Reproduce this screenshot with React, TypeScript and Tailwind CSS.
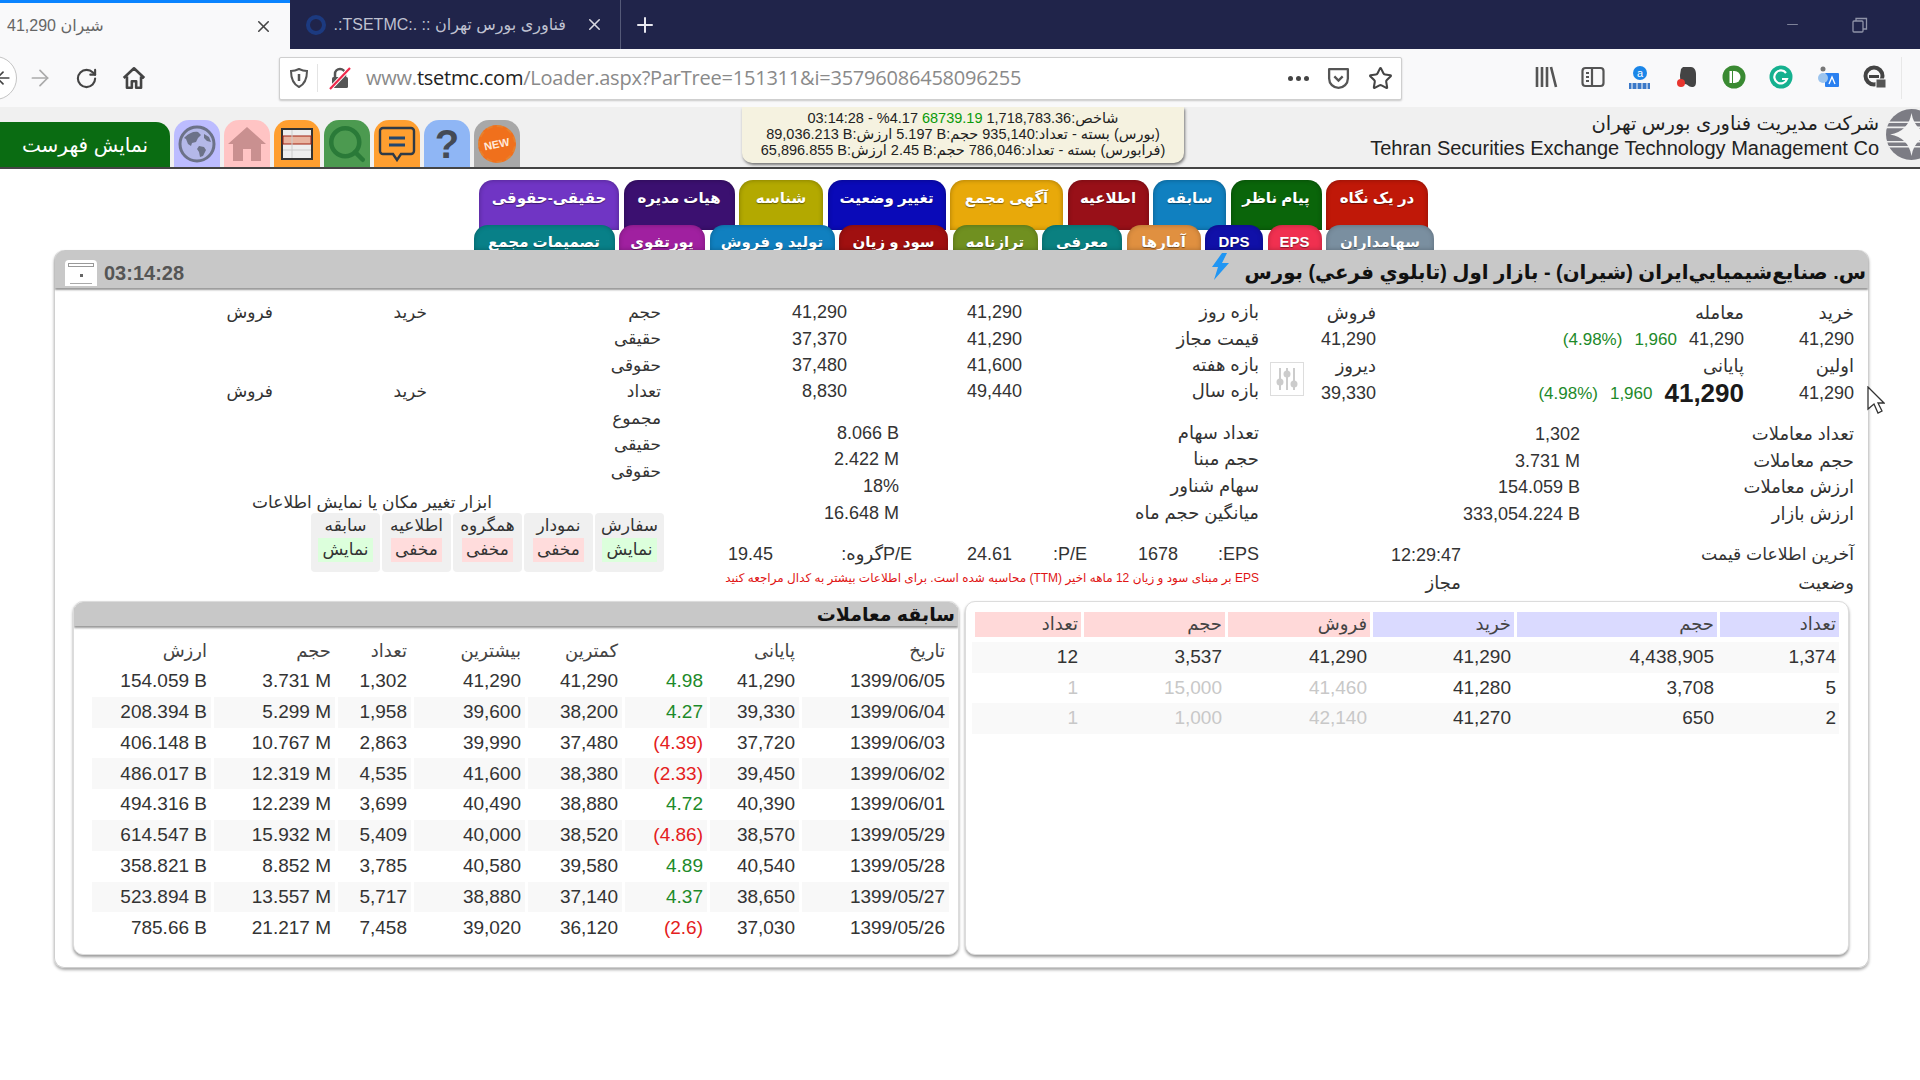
import { Search, RotateCw, ArrowRight, ArrowLeft, X, Plus, Star, Minus } from "lucide-react";

const topTabs = [
  { label: "حقیقی-حقوقی", w: "w-[140px]", bg: "bg-[#7035c4]" },
  { label: "هیات مدیره", w: "w-[111px]", bg: "bg-[#3b1070]" },
  { label: "شناسه", w: "w-[84px]", bg: "bg-[#b3a900]" },
  { label: "تغییر وضعیت", w: "w-[118px]", bg: "bg-[#0a0ab8]" },
  { label: "آگهی مجمع", w: "w-[113px]", bg: "bg-[#e8a90a]" },
  { label: "اطلاعیه", w: "w-[81px]", bg: "bg-[#981018]" },
  { label: "سابقه", w: "w-[73px]", bg: "bg-[#1080c0]" },
  { label: "پیام ناظر", w: "w-[91px]", bg: "bg-[#0a650a]" },
  { label: "در یک نگاه", w: "w-[102px]", bg: "bg-[#c01808]" },
];

const lowerTabs = [
  { label: "تصمیمات مجمع", w: "w-[141px]", bg: "bg-[#088088]" },
  { label: "پورتفوی", w: "w-[86px]", bg: "bg-[#a020a0]" },
  { label: "تولید و فروش", w: "w-[125px]", bg: "bg-[#1080c0]" },
  { label: "سود و زیان", w: "w-[109px]", bg: "bg-[#a01010]" },
  { label: "ترازنامه", w: "w-[85px]", bg: "bg-[#709020]" },
  { label: "معرفی", w: "w-[80px]", bg: "bg-[#0a8080]" },
  { label: "آمارها", w: "w-[74px]", bg: "bg-[#e09040]" },
  { label: "DPS", w: "w-[58px]", bg: "bg-[#1010a8]" },
  { label: "EPS", w: "w-[54px]", bg: "bg-[#f03050]" },
  { label: "سهامداران", w: "w-[108px]", bg: "bg-[#7a8fa0]" },
];

const history = [
  ["1399/06/05", "41,290", "4.98", "41,290", "41,290", "1,302", "3.731 M", "154.059 B"],
  ["1399/06/04", "39,330", "4.27", "38,200", "39,600", "1,958", "5.299 M", "208.394 B"],
  ["1399/06/03", "37,720", "(4.39)", "37,480", "39,990", "2,863", "10.767 M", "406.148 B"],
  ["1399/06/02", "39,450", "(2.33)", "38,380", "41,600", "4,535", "12.319 M", "486.017 B"],
  ["1399/06/01", "40,390", "4.72", "38,880", "40,490", "3,699", "12.239 M", "494.316 B"],
  ["1399/05/29", "38,570", "(4.86)", "38,520", "40,000", "5,409", "15.932 M", "614.547 B"],
  ["1399/05/28", "40,540", "4.89", "39,580", "40,580", "3,785", "8.852 M", "358.821 B"],
  ["1399/05/27", "38,650", "4.37", "37,140", "38,880", "5,717", "13.557 M", "523.894 B"],
  ["1399/05/26", "37,030", "(2.6)", "36,120", "39,020", "7,458", "21.217 M", "785.66 B"],
];

const orders = [
  { buyCount: "1,374", buyVol: "4,438,905", buy: "41,290", sell: "41,290", sellVol: "3,537", sellCount: "12", dim: false },
  { buyCount: "5", buyVol: "3,708", buy: "41,280", sell: "41,460", sellVol: "15,000", sellCount: "1", dim: true },
  { buyCount: "2", buyVol: "650", buy: "41,270", sell: "42,140", sellVol: "1,000", sellCount: "1", dim: true },
];

const tools = [
  { title: "سفارش", state: "نمایش", tone: "bg-[#dcffdc]" },
  { title: "نمودار", state: "مخفی", tone: "bg-[#ffdcdc]" },
  { title: "همگروه", state: "مخفی", tone: "bg-[#ffdcdc]" },
  { title: "اطلاعیه", state: "مخفی", tone: "bg-[#ffdcdc]" },
  { title: "سابقه", state: "نمایش", tone: "bg-[#dcffdc]" },
];

const historyCols = "grid grid-cols-[150px_92px_85px_97px_114px_76px_124px_122px]";
const orderCols = "grid w-[867px] grid-cols-[122px_203px_144px_145px_144px_109px]";

function Num({ children, className = "" }: { children: React.ReactNode; className?: string }) {
  return (
    <span dir="ltr" className={`inline-block ${className}`}>
      {children}
    </span>
  );
}

function PageIconTab({ bg, children }: { bg: string; children: React.ReactNode }) {
  return (
    <div className={`w-[46px] h-[48px] rounded-t-[15px] flex items-center justify-center ${bg}`}>{children}</div>
  );
}

function BrowserChrome() {
  return (
    <>
      <div className="h-[49px] bg-[#20244a] flex">
        <div className="w-[290px] bg-[#f9f9fa] border-t-[3px] border-[#0a84ff] flex items-center pl-[7px] pr-[17px]">
          <span dir="rtl" className="text-[16px] text-[#666]">
            شیران 41,290
          </span>
          <X className="ml-auto text-[#444]" size={19} strokeWidth={2} />
        </div>
        <div className="w-[331px] border-r border-[#555a78] flex items-center pl-[16px] pr-[16px]">
          <span className="w-[20px] h-[20px] rounded-full border-[4px] border-[#1c3a80] shrink-0" />
          <span dir="rtl" className="ml-[6px] w-[234px] overflow-hidden whitespace-nowrap text-[16px] text-[#bfc1d0]">
            فناوری بورس تهران :: .:TSETMC:.
          </span>
          <X className="ml-auto text-[#d8d8e0]" size={19} strokeWidth={2} />
        </div>
        <div className="w-[48px] flex items-center justify-center">
          <Plus className="text-[#e8e8f0]" size={24} strokeWidth={2} />
        </div>
        <div className="ml-auto flex items-center pr-[52px] gap-[51px] text-[#8f93a8]">
          <Minus size={17} strokeWidth={1.2} />
          <svg width="16" height="16" viewBox="0 0 16 16" fill="none" stroke="currentColor" strokeWidth="1.3">
            <rect x="1" y="4" width="10" height="11" rx="1" />
            <path d="M4 4V1.5h10.5V12H11" />
          </svg>
        </div>
      </div>

      <div className="h-[58px] bg-[#f9f9fa] flex items-center">
        <div className="w-[44px] h-[44px] -ml-[27px] rounded-full border border-[#c4c4c4] bg-white flex items-center justify-center shrink-0">
          <ArrowLeft className="text-[#444] ml-[16px]" size={20} />
        </div>
        <div className="w-[46px] flex justify-center">
          <ArrowRight className="text-[#aaa]" size={26} strokeWidth={1.6} />
        </div>
        <div className="w-[47px] flex justify-center">
          <RotateCw className="text-[#444]" size={23} strokeWidth={2.2} />
        </div>
        <div className="w-[47px] flex justify-center">
          <svg width="26" height="26" viewBox="0 0 24 24" fill="none" stroke="#444" strokeWidth="2.4" strokeLinejoin="round">
            <path d="M2.5 12 12 3l9.5 9M5.5 10.5V21h4.5v-6h4v6h4.500V10.500" />
          </svg>
        </div>
        <div className="ml-[122px] w-[1123px] h-[43px] bg-white border border-[#cfcfcf] rounded-[2px] shadow-[0_1px_2px_rgba(0,0,0,0.2)] flex items-center">
          <div className="w-[38px] h-[28px] border-r border-[#e4e4e4] flex items-center justify-center">
            <svg width="20" height="22" viewBox="0 0 20 22" fill="none" stroke="#555" strokeWidth="2">
              <path d="M10 2c3 1.500 5 2 8 2 0 8-2 13-8 16C4 17 2 12 2 4c3 0 5-.5 8-2Z" />
              <path d="M10 7v7" strokeWidth="2.500" />
            </svg>
          </div>
          <div className="w-[48px] flex justify-center pr-[4px]">
            <svg width="24" height="24" viewBox="0 0 24 24">
              <path d="M7 11V8a5 5 0 0 1 10 0v3" fill="none" stroke="#555" strokeWidth="2.500" />
              <rect x="4" y="11" width="16" height="11" rx="1.500" fill="#555" />
              <path d="M2 23 22 2" stroke="#fff" strokeWidth="4" />
              <path d="M2 23 22 2" stroke="#f0284a" strokeWidth="2.200" />
            </svg>
          </div>
          <span className="text-[20px] text-[#8a8a8a] [font-family:'Open_Sans',sans-serif] tracking-[-0.22px]">
            www.<span className="text-[#222]">tsetmc.com</span>/Loader.aspx?ParTree=151311&i=35796086458096255
          </span>
          <div className="ml-auto flex items-center gap-[17px] pr-[8px]">
            <div className="flex gap-[3px]">
              <i className="w-[5px] h-[5px] rounded-full bg-[#444]" />
              <i className="w-[5px] h-[5px] rounded-full bg-[#444]" />
              <i className="w-[5px] h-[5px] rounded-full bg-[#444]" />
            </div>
            <svg width="25" height="25" viewBox="0 0 24 24" fill="none" stroke="#555" strokeWidth="2.200">
              <path d="M3 3h18v9a9 9 0 0 1-18 0Z" strokeLinejoin="round" />
              <path d="m8 10 4 4 4-4" />
            </svg>
            <Star className="text-[#444]" size={25} strokeWidth={2} />
          </div>
        </div>
        <div className="ml-[120px] flex">
          <div className="w-[47px] flex justify-center">
            <svg width="24" height="24" viewBox="0 0 24 24" stroke="#555" strokeWidth="2.600" fill="none">
              <path d="M3 2v20M8 2v20M13 2v20M17 2l5 20" />
            </svg>
          </div>
          <div className="w-[47px] flex justify-center">
            <svg width="24" height="24" viewBox="0 0 24 24" fill="none" stroke="#555" strokeWidth="2.200">
              <rect x="1.500" y="3" width="21" height="18" rx="3" />
              <path d="M11 3v18M5 8h3M5 12h3M5 16h3" />
            </svg>
          </div>
          <div className="w-[47px] flex justify-center">
            <svg width="24" height="26" viewBox="0 0 24 26">
              <circle cx="12" cy="8" r="7" fill="#1b86e8" />
              <text x="12" y="12" fontSize="11" fill="#fff" textAnchor="middle" fontFamily="Liberation Sans">a</text>
              <rect x="1" y="18" width="21" height="6" fill="#3a78c8" />
              <path d="M4 18v6M9 18v6M14 18v6M19 18v6" stroke="#fff" />
            </svg>
          </div>
          <div className="w-[47px] flex justify-center">
            <svg width="22" height="24" viewBox="0 0 22 24">
              <path d="M7 2h8c3 0 5 3 5 7v8c0 3-1 5-4 5-4 0-4-3-7-3H6c-2-3-2-7-2-9l1-6Z" fill="#444" />
              <circle cx="5" cy="18" r="4" fill="#e8352e" />
            </svg>
          </div>
          <div className="w-[47px] flex justify-center">
            <svg width="24" height="24" viewBox="0 0 24 24">
              <circle cx="12" cy="12" r="11.500" fill="#3a8a32" />
              <rect x="7.500" y="6" width="2.500" height="12" fill="#fff" />
              <path d="M11 6h1.500a6 6 0 0 1 0 12H11Z" fill="#fff" />
            </svg>
          </div>
          <div className="w-[47px] flex justify-center">
            <svg width="24" height="24" viewBox="0 0 24 24">
              <circle cx="12" cy="12" r="11.500" fill="#15b18f" />
              <path d="M17 8a6.500 6.500 0 1 0 1 6h-5" fill="none" stroke="#fff" strokeWidth="2.200" />
            </svg>
          </div>
          <div className="w-[47px] flex justify-center">
            <svg width="24" height="24" viewBox="0 0 24 24">
              <rect x="9" y="8" width="14" height="14" rx="1" fill="#2a80f0" />
              <path d="M13 19l3-7 3 7" fill="none" stroke="#fff" strokeWidth="1.300" />
              <circle cx="7" cy="13" r="5" fill="#9cc4ee" />
              <circle cx="7" cy="4" r="2.500" fill="#777" />
            </svg>
          </div>
          <div className="w-[47px] flex justify-center">
            <svg width="24" height="24" viewBox="0 0 24 24">
              <circle cx="11" cy="11" r="8.500" fill="none" stroke="#444" strokeWidth="4" />
              <rect x="6" y="10" width="10" height="3" fill="#444" />
              <rect x="13" y="14" width="10" height="9" fill="#555" stroke="#f9f9fa" />
            </svg>
          </div>
        </div>
        <div className="ml-[3px] h-[42px] border-l border-[#e8e8e8]" />
      </div>
    </>
  );
}

function SiteHeader() {
  return (
    <div className="h-[62px] bg-[#f0f0f0] border-b-2 border-[#444] flex overflow-hidden">
      <div className="w-[170px] h-[45px] mt-[15px] bg-[#0a6c12] rounded-tr-[14px] flex items-center justify-center text-white text-[20px]">
        نمایش فهرست
      </div>
      <div className="ml-[4px] mt-[13px] flex gap-[4px]">
        <PageIconTab bg="bg-[#bcbcff]">
          <svg width="38" height="38" viewBox="0 0 38 38">
            <circle cx="19" cy="19" r="17" fill="#b4b8e8" stroke="#6c7288" strokeWidth="3" />
            <path d="M7 12c4-4 9-6 13-5l3 3-3 3-2 4-4 1-1 3-3-2-2-5-2-1ZM21 21l5 1 2 3-3 6-3 1-1-5-2-3ZM26 9l5 3 2 5-4-1-3-3Z" fill="#6c7288" />
          </svg>
        </PageIconTab>
        <PageIconTab bg="bg-[#ffc4c4]">
          <svg width="40" height="36" viewBox="0 0 40 36" fill="#c99090">
            <path d="M20 1 39 18h-5v17H24V23h-8v12H6V18H1Z" />
          </svg>
        </PageIconTab>
        <PageIconTab bg="bg-[#ff9f30]">
          <svg width="32" height="32" viewBox="0 0 32 32">
            <rect x="1" y="1" width="30" height="30" fill="#eee" stroke="#333" strokeWidth="2" />
            <rect x="2" y="8" width="28" height="8" fill="#e8b4a0" stroke="#a02010" />
            <path d="M2 22h28M11 2v28" stroke="#ccc" />
          </svg>
        </PageIconTab>
        <PageIconTab bg="bg-[#4c9a50]">
          <Search className="text-[#2a7a38]" size={42} strokeWidth={2.600} />
        </PageIconTab>
        <PageIconTab bg="bg-[#ff9f30]">
          <svg width="38" height="36" viewBox="0 0 38 36" fill="none">
            <path d="M5 2h28a3 3 0 0 1 3 3v20a3 3 0 0 1-3 3H23l-4 6-4-6H5a3 3 0 0 1-3-3V5a3 3 0 0 1 3-3Z" stroke="#2f3a46" strokeWidth="2.400" />
            <path d="M11 12h16M11 19h16" stroke="#23466e" strokeWidth="3" />
          </svg>
        </PageIconTab>
        <PageIconTab bg="bg-[#8fb6f5]">
          <span className="text-[40px] leading-none font-bold text-[#444a55]">?</span>
        </PageIconTab>
        <PageIconTab bg="bg-[#a8a8a8]">
          <div className="w-[38px] h-[38px] rounded-full bg-[#f0701c] border-2 border-dashed border-[#e8802c] flex items-center justify-center">
            <span className="text-[11px] font-bold text-[#ffe8d8] -rotate-12">NEW</span>
          </div>
        </PageIconTab>
      </div>

      <div className="ml-[222px] w-[442px] h-[56px] bg-[#f5f2e0] rounded-b-[10px] shadow-[1px_2px_3px_rgba(0,0,0,0.5)] text-[14.500px] leading-[16px] text-[#222] text-center pt-[3px] whitespace-nowrap">
        <div dir="rtl">
          شاخص:1,718,783.36 <span className="text-[#0a9a0a]">68739.19</span> <bdi dir="ltr">%4.17</bdi> - 03:14:28
        </div>
        <div dir="rtl">
          (بورس) بسته - تعداد:935,140 حجم:<bdi dir="ltr">5.197 B</bdi> ارزش:<bdi dir="ltr">89,036.213 B</bdi>
        </div>
        <div dir="rtl">
          (فرابورس) بسته - تعداد:786,046 حجم:<bdi dir="ltr">2.45 B</bdi> ارزش:<bdi dir="ltr">65,896.855 B</bdi>
        </div>
      </div>

      <div className="ml-auto flex items-start text-[#222]">
        <div className="text-right pt-[3px]">
          <div dir="rtl" className="text-[19.500px] leading-[26px]">
            شرکت مدیریت فناوری بورس تهران
          </div>
          <div className="text-[20px] leading-[24px] whitespace-nowrap">Tehran Securities Exchange Technology Management Co</div>
        </div>
        <svg className="ml-[7px] mt-[2px] -mr-[17px]" width="51" height="51" viewBox="0 0 50 50">
          <circle cx="25" cy="25" r="25" fill="#7c7c84" />
          <path d="M0 13h50M0 18h50M0 32h50M0 37h50" stroke="#eee" strokeWidth="1.500" />
          <path d="M25 4c2 12 9 19 21 21-12 2-19 9-21 21-2-12-9-19-21-21 12-2 19-9 21-21Z" fill="#f4f4f4" />
        </svg>
      </div>
    </div>
  );
}

function TabRows() {
  return (
    <div dir="ltr" className="flex flex-col items-end text-white font-bold text-[15px] [text-shadow:0_1px_1px_rgba(0,0,0,0.45)]">
      <div className="flex gap-[4.500px] mr-[441px] h-[50px] -mb-[5px]">
        {topTabs.map((t) => (
          <div
            key={t.label}
            dir="rtl"
            className={`${t.w} ${t.bg} rounded-t-[14px] pt-[7px] text-center whitespace-nowrap shadow-[inset_0_0_5px_rgba(0,0,0,0.3)]`}
          >
            {t.label}
          </div>
        ))}
      </div>
      <div className="flex gap-[4.500px] mr-[435px] h-[25px] relative">
        {lowerTabs.map((t) => (
          <div
            key={t.label}
            dir="rtl"
            className={`${t.w} ${t.bg} rounded-t-[14px] pt-[6px] text-center whitespace-nowrap overflow-hidden shadow-[inset_0_0_5px_rgba(0,0,0,0.25)]`}
          >
            {t.label}
          </div>
        ))}
      </div>
    </div>
  );
}

function QuoteColumn() {
  return (
    <div className="w-[600px] pr-[14px] shrink-0">
      <div className="pt-[12px] grid grid-cols-[110px_368px_72px_34px] grid-rows-[26px_26px_28px_26px] items-center">
        <span>خرید</span>
        <span>معامله</span>
        <span>فروش</span>
        <span />
        <Num className="justify-self-start">41,290</Num>
        <div className="flex items-center gap-[12px]">
          <Num>41,290</Num>
          <Num className="text-[#1d8a2a] text-[17px]">1,960</Num>
          <Num className="text-[#1d8a2a] text-[17px]">(4.98%)</Num>
        </div>
        <Num className="justify-self-start">41,290</Num>
        <span />
        <span>اولین</span>
        <span>پایانی</span>
        <span>دیروز</span>
        <div className="row-span-2 self-center w-[34px] h-[34px] border border-[#ddd] flex items-center justify-center">
          <svg width="24" height="26" viewBox="0 0 24 26" stroke="#ccc" strokeWidth="2" fill="#ccc">
            <path d="M5 2v22M12 2v22M19 2v22" />
            <circle cx="5" cy="16" r="2.500" />
            <circle cx="12" cy="8" r="2.500" />
            <circle cx="19" cy="18" r="2.500" />
          </svg>
        </div>
        <Num className="justify-self-start">41,290</Num>
        <div className="flex items-center gap-[12px]">
          <Num className="font-bold text-[26px] text-[#1a1a1a]">41,290</Num>
          <Num className="text-[#1d8a2a] text-[17px]">1,960</Num>
          <Num className="text-[#1d8a2a] text-[17px]">(4.98%)</Num>
        </div>
        <Num className="justify-self-start">39,330</Num>
      </div>

      <div className="mt-[15px] grid grid-cols-[274px_1fr] auto-rows-[26.500px] items-center">
        <span>تعداد معاملات</span>
        <Num className="justify-self-start">1,302</Num>
        <span>حجم معاملات</span>
        <Num className="justify-self-start">3.731 M</Num>
        <span>ارزش معاملات</span>
        <Num className="justify-self-start">154.059 B</Num>
        <span>ارزش بازار</span>
        <Num className="justify-self-start">333,054.224 B</Num>
      </div>

      <div className="mt-[14px] grid grid-cols-[393px_1fr] auto-rows-[28px] items-center">
        <span className="text-[17.200px]">آخرین اطلاعات قیمت</span>
        <Num className="justify-self-start">12:29:47</Num>
        <span>وضعیت</span>
        <span>مجاز</span>
      </div>
    </div>
  );
}

function RangeColumn() {
  return (
    <div className="w-[598px] pr-[9px] shrink-0">
      <div className="pt-[11px] grid grid-cols-[237px_175px_1fr] auto-rows-[26.400px] items-center">
        <span>بازه روز</span>
        <Num className="justify-self-start">41,290</Num>
        <Num className="justify-self-start">41,290</Num>
        <span>قیمت مجاز</span>
        <Num className="justify-self-start">41,290</Num>
        <Num className="justify-self-start">37,370</Num>
        <span>بازه هفته</span>
        <Num className="justify-self-start">41,600</Num>
        <Num className="justify-self-start">37,480</Num>
        <span>بازه سال</span>
        <Num className="justify-self-start">49,440</Num>
        <Num className="justify-self-start">8,830</Num>
      </div>

      <div className="mt-[15px] grid grid-cols-[360px_1fr] auto-rows-[26.600px] items-center">
        <span>تعداد سهام</span>
        <Num className="justify-self-start">8.066 B</Num>
        <span>حجم مبنا</span>
        <Num className="justify-self-start">2.422 M</Num>
        <span>سهام شناور</span>
        <Num className="justify-self-start">18%</Num>
        <span>میانگین حجم ماه</span>
        <Num className="justify-self-start">16.648 M</Num>
      </div>

      <div className="mt-[14px] grid grid-cols-[81px_91px_75px_100px_139px_1fr] h-[28px] items-center">
        <Num className="justify-self-start">:EPS</Num>
        <Num className="justify-self-start">1678</Num>
        <Num className="justify-self-start">:P/E</Num>
        <Num className="justify-self-start">24.61</Num>
        <span className="whitespace-nowrap">P/Eگروه:</span>
        <Num className="justify-self-start">19.45</Num>
      </div>
      <div className="h-[20px] text-[12px] leading-[20px] text-[#e01414] whitespace-nowrap">
        EPS بر مبنای سود و زیان 12 ماهه اخیر (TTM) محاسبه شده است. برای اطلاعات بیشتر به کدال مراجعه کنید
      </div>
    </div>
  );
}

function ClientColumn() {
  const rows = [
    ["حجم", "خرید", "فروش"],
    ["حقیقی"],
    ["حقوقی"],
    ["تعداد", "خرید", "فروش"],
    ["مجموع"],
    ["حقیقی"],
    ["حقوقی"],
  ];
  return (
    <div className="flex-1 pr-[9px] text-[17px]">
      <div className="pt-[11px]">
        {rows.map((r, i) => (
          <div key={i} className="h-[26.500px] flex items-center">
            <span className="w-[234px]">{r[0]}</span>
            <span className="w-[154px]">{r[1]}</span>
            <span>{r[2]}</span>
          </div>
        ))}
      </div>
      <div className="mt-[7px] h-[21px] pr-[169px] leading-[21px] text-[#333] whitespace-nowrap">ابزار تغییر مکان یا نمایش اطلاعات</div>
      <div className="flex gap-[2px] mr-[-3px]">
        {tools.map((t) => (
          <div key={t.title} className="w-[69px] h-[59px] rounded-[4px] bg-[#f0f0f0] text-center leading-[24px] pt-[1px]">
            <div>{t.title}</div>
            <div className={`inline-block px-[4px] ${t.tone}`}>{t.state}</div>
          </div>
        ))}
      </div>
    </div>
  );
}

function HistoryCard() {
  return (
    <div className="w-[886px] h-[354px] rounded-[10px] border border-[#dcdcdc] shadow-[0_2px_3px_#999] bg-white overflow-hidden">
      <div className="h-[24px] bg-[#c8c8c8] shadow-[0_2px_2px_#999] pr-[3px] text-[19px] font-bold leading-[26px] text-[#111]">
        سابقه معاملات
      </div>
      <div className="pt-[10px] pr-[9px]">
        <div className={`${historyCols} h-[30px] items-center text-[#444]`}>
          {["تاریخ", "پایانی", "", "کمترین", "بیشترین", "تعداد", "حجم", "ارزش"].map((h, i) => (
            <span key={i} className="pr-[4px]">
              {h}
            </span>
          ))}
        </div>
        {history.map((row, i) => (
          <div key={row[0]} className={`${historyCols} h-[30.800px] items-center text-[19px]`}>
            {row.map((c, j) => {
              const tone = j === 2 ? (c.startsWith("(") ? "text-[#e42020]" : "text-[#1d8a2a]") : "";
              return (
                <div key={j} className={`h-full flex items-center pr-[4px] border-l-[3px] border-white ${i % 2 === 1 ? "bg-[#f8f8f8]" : ""}`}>
                  <Num className={tone}>{c}</Num>
                </div>
              );
            })}
          </div>
        ))}
      </div>
    </div>
  );
}

function OrdersCard() {
  return (
    <div className="w-[884px] h-[354px] rounded-[10px] border border-[#dcdcdc] shadow-[0_2px_3px_#999] bg-white pt-[10px] pr-[9px]">
      <div className={`${orderCols} h-[25px] text-[#444]`}>
        {["تعداد", "حجم", "خرید"].map((h) => (
          <div key={h} className="bg-[#dadaff] border-l-[3px] border-white pr-[3px] leading-[25px]">
            {h}
          </div>
        ))}
        {["فروش", "حجم", "تعداد"].map((h) => (
          <div key={h} className="bg-[#ffd9d9] border-l-[3px] border-white pr-[3px] leading-[25px]">
            {h}
          </div>
        ))}
      </div>
      <div className="mt-[5px]">
        {orders.map((o, i) => {
          const sellTone = o.dim ? "text-[#c8c8c8]" : "";
          return (
            <div key={o.buy} className={`${orderCols} h-[30.600px] items-center text-[19px] ${i % 2 === 0 ? "bg-[#f9f9f9]" : ""}`}>
              <div className="pr-[3px]"><Num>{o.buyCount}</Num></div>
              <div className="pr-[3px]"><Num>{o.buyVol}</Num></div>
              <div className="pr-[3px]"><Num>{o.buy}</Num></div>
              <div className="pr-[3px]"><Num className={sellTone}>{o.sell}</Num></div>
              <div className="pr-[3px]"><Num className={sellTone}>{o.sellVol}</Num></div>
              <div className="pr-[3px]"><Num className={sellTone}>{o.sellCount}</Num></div>
            </div>
          );
        })}
      </div>
    </div>
  );
}

export default function App() {
  return (
    <div className="relative w-[1920px] h-[1080px] overflow-hidden bg-white [font-family:'Liberation_Sans','DejaVu_Sans',sans-serif]">
      <BrowserChrome />
      <SiteHeader />

      <div className="ml-[54px] mt-[11px] w-[1815px]">
        <TabRows />
        <div className="rounded-[10px] border-x border-b border-[#cfcfcf] shadow-[0_2px_3px_#aaa] h-[718px]">
          <div dir="rtl" className="h-[38px] bg-[#c8c8c8] rounded-t-[10px] shadow-[0_2px_2px_#999] flex items-center pr-[2px]">
            <span className="text-[19.800px] font-bold text-[#111] whitespace-nowrap mt-[7px]">
              س. صنايع‌شيميايي‌ايران (شيران) - بازار اول (تابلوي فرعي) بورس
            </span>
            <svg className="mr-[15px] self-start mt-[3px]" width="19" height="27" viewBox="0 0 19 27" fill="#2196f3">
              <path d="M11 0 1 14h6L3 27l15-17h-7l5-10Z" />
            </svg>
            <div className="mr-auto flex items-center gap-[7px] self-end pl-[10px]">
              <span dir="ltr" className="text-[20px] font-bold text-[#555]">
                03:14:28
              </span>
              <div className="w-[32px] h-[26px] bg-white rounded-t-[4px] flex flex-col justify-between items-center pt-[3px]">
                <div className="w-[26px] h-[4px] border border-[#999]" />
                <div className="w-[3px] h-[3px] bg-[#666]" />
                <div className="w-[22px] h-[3px] border-t border-[#aaa]" />
              </div>
            </div>
          </div>

          <div dir="rtl" className="text-[18px] text-[#333]">
            <div className="flex h-[311px] [&_span]:leading-none">
              <QuoteColumn />
              <RangeColumn />
              <ClientColumn />
            </div>
            <div className="mt-[2px] flex gap-[6px] pr-[19px]">
              <OrdersCard />
              <HistoryCard />
            </div>
          </div>
        </div>
      </div>

      <svg className="absolute left-[1867px] top-[386px]" width="18" height="28" viewBox="0 0 18 28">
        <path d="M1 1v22l6-5 4 9 4-2-4-8h6Z" fill="#fff" stroke="#333" strokeWidth="1.300" />
      </svg>
    </div>
  );
}
